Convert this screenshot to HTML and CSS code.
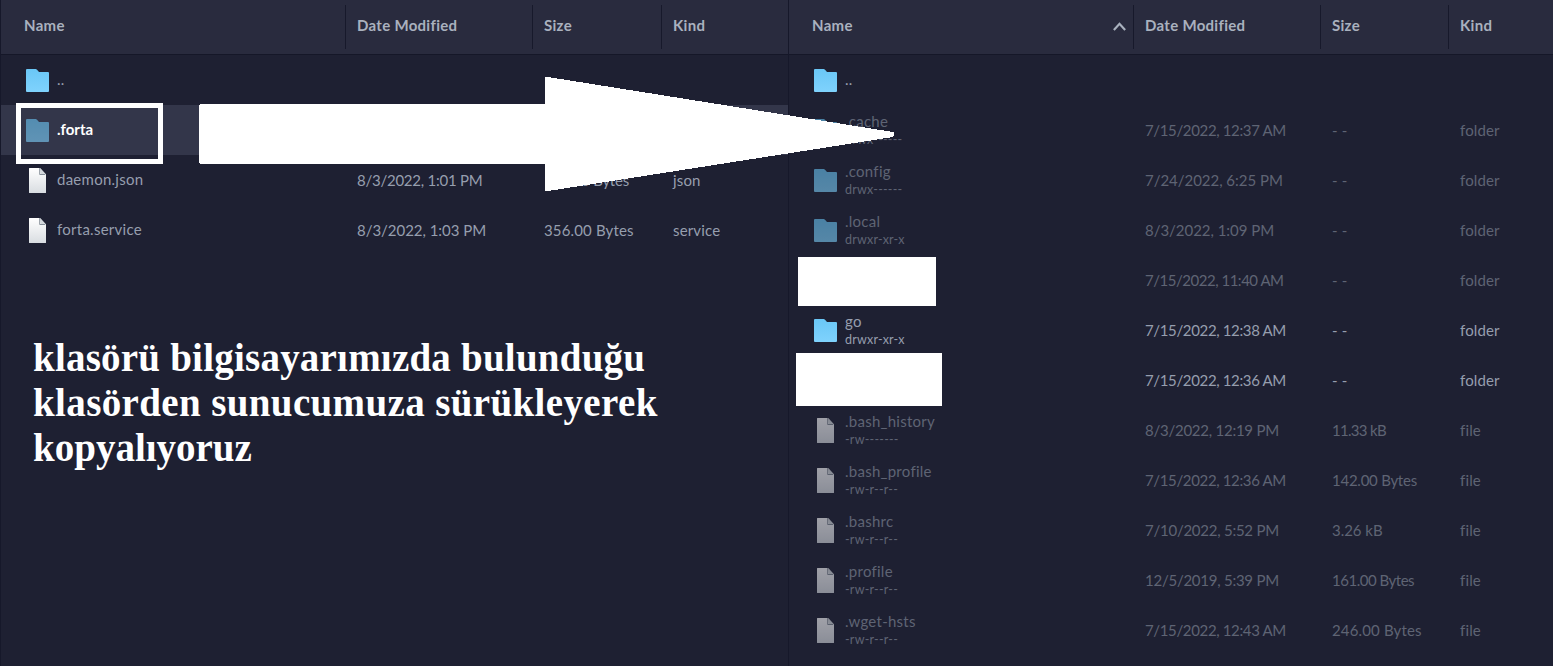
FILE: index.html
```html
<!DOCTYPE html>
<html lang="tr">
<head>
<meta charset="utf-8">
<title>Dosyalar</title>
<link rel="stylesheet" href="styles.css">
</head>
<body>
<svg class="defs" width="0" height="0">
  <defs>
    <linearGradient id="blue" x1="0" y1="0" x2="0" y2="1"><stop offset="0" stop-color="#6ac7f6"/><stop offset="1" stop-color="#7fd2fd"/></linearGradient>
    <linearGradient id="paper" x1="0" y1="0" x2="0" y2="1"><stop offset="0" stop-color="#ffffff"/><stop offset="1" stop-color="#d9dde1"/></linearGradient>
    <symbol id="folder" viewBox="0 0 23 23"><path fill="url(#blue)" d="M1 0h8.6c.6 0 1 .2 1.400.7L13 3h9a1 1 0 0 1 1 1v18a1 1 0 0 1-1 1H1a1 1 0 0 1-1-1V1a1 1 0 0 1 1-1z"/></symbol>
    <symbol id="file" viewBox="0 0 17 25"><path fill="url(#paper)" d="M.5 0H11l6 6.500v18a.5.5 0 0 1-.5.5H.5a.5.5 0 0 1-.5-.5V.5A.5.5 0 0 1 .5 0z"/><path fill="#d3d8dc" d="M11 0l6 6.500h-5z"/><path fill="none" stroke="#6b7681" stroke-width=".8" d="M10.700 0v6.500H16"/></symbol>
  </defs>
</svg>
<main class="panes">
  <section class="pane">
    <div class="head"><span>Name</span><span>Date Modified</span><span>Size</span><span>Kind</span></div>
    <div class="row"><div class="name"><svg class="folder"><use href="#folder"/></svg><b>..</b></div></div>
    <div class="row selected"><div class="name"><svg class="folder"><use href="#folder"/></svg><b>.forta</b></div></div>
    <div class="row"><div class="name"><svg class="file"><use href="#file"/></svg><b>daemon.json</b></div><span class="k1">8/3/2022, 1:01 PM</span><span class="k1">155.00 Bytes</span><span>json</span></div>
    <div class="row"><div class="name"><svg class="file"><use href="#file"/></svg><b>forta.service</b></div><span class="k0">8/3/2022, 1:03 PM</span><span>356.00 Bytes</span><span>service</span></div>
    <p class="note"><span class="n1">klasörü bilgisayarımızda bulunduğu</span><br><span class="n2">klasörden sunucumuza sürükleyerek</span><br>kopyalıyoruz</p>
  </section>
  <section class="pane remote">
    <div class="head"><span>Name<svg class="sort" viewBox="0 0 12 8"><path d="M.8 7.200l5.200-5.700 5.200 5.700"/></svg></span><span>Date Modified</span><span>Size</span><span>Kind</span></div>
    <div class="row"><div class="name"><svg class="folder"><use href="#folder"/></svg><b>..</b></div></div>
    <div class="row dim"><div class="name"><svg class="folder"><use href="#folder"/></svg><b>.cache<i>drwx------</i></b></div><span class="k2">7/15/2022, 12:37 AM</span><span>- -</span><span>folder</span></div>
    <div class="row dim"><div class="name"><svg class="folder"><use href="#folder"/></svg><b>.config<i>drwx------</i></b></div><span class="k0">7/24/2022, 6:25 PM</span><span>- -</span><span>folder</span></div>
    <div class="row dim"><div class="name"><svg class="folder"><use href="#folder"/></svg><b>.local<i>drwxr-xr-x</i></b></div><span class="k0">8/3/2022, 1:09 PM</span><span>- -</span><span>folder</span></div>
    <div class="row dim"><div class="name"></div><span class="k3">7/15/2022, 11:40 AM</span><span>- -</span><span>folder</span></div>
    <div class="row"><div class="name"><svg class="folder"><use href="#folder"/></svg><b>go<i>drwxr-xr-x</i></b></div><span class="k2">7/15/2022, 12:38 AM</span><span>- -</span><span>folder</span></div>
    <div class="row"><div class="name"></div><span class="k2">7/15/2022, 12:36 AM</span><span>- -</span><span>folder</span></div>
    <div class="row dim"><div class="name"><svg class="file"><use href="#file"/></svg><b>.bash_history<i>-rw-------</i></b></div><span class="k1">8/3/2022, 12:19 PM</span><span class="k4">11.33 kB</span><span>file</span></div>
    <div class="row dim"><div class="name"><svg class="file"><use href="#file"/></svg><b>.bash_profile<i>-rw-r--r--</i></b></div><span class="k2">7/15/2022, 12:36 AM</span><span class="k1">142.00 Bytes</span><span>file</span></div>
    <div class="row dim"><div class="name"><svg class="file"><use href="#file"/></svg><b>.bashrc<i>-rw-r--r--</i></b></div><span class="k1">7/10/2022, 5:52 PM</span><span class="k0">3.26 kB</span><span>file</span></div>
    <div class="row dim"><div class="name"><svg class="file"><use href="#file"/></svg><b>.profile<i>-rw-r--r--</i></b></div><span class="k1">12/5/2019, 5:39 PM</span><span class="k3">161.00 Bytes</span><span>file</span></div>
    <div class="row dim"><div class="name"><svg class="file"><use href="#file"/></svg><b>.wget-hsts<i>-rw-r--r--</i></b></div><span class="k2">7/15/2022, 12:43 AM</span><span>246.00 Bytes</span><span>file</span></div>
  </section>
</main>
<div class="frame"></div>
<svg class="arrow" width="697" height="115" viewBox="0 0 697 115" shape-rendering="crispEdges"><path fill="#fff" d="M1 27h345V0h3l345 55q3 2 0 5L349 114h-3V87H1l-1-1V28z"/></svg>
<div class="cover first"></div>
<div class="cover second"></div>
</body>
</html>
```

FILE: styles.css
```css
body {
  margin: 0;
  width: 1553px;
  height: 666px;
  overflow: hidden;
  background: #1e2032;
  color: #969eae;
  font: 15px/20px Lato, "Noto Sans", sans-serif;
  position: relative;
}
.defs { position: absolute; }
.panes { display: grid; grid-template-columns: 788px 765px; height: 666px; }
.pane { border-left: 1px solid #16182a; box-sizing: border-box; overflow: hidden; }
.head, .row { display: grid; grid-template-columns: 344px 187px 129px 1fr; align-items: center; }
.remote .head, .remote .row { grid-template-columns: 344px 187px 128px 1fr; }
.head { height: 54px; background: #292b3e; border-bottom: 1px solid #151728; color: #a9b1be; font-weight: 700; letter-spacing: .3px; }
.head span {
  display: flex;
  align-items: center;
  justify-content: space-between;
  height: 44px;
  box-sizing: border-box;
  padding: 0 7px 4px 11px;
  border-left: 1px solid #17192b;
}
.head span:first-child { border-left: 0; padding-left: 23px; }
.sort { width: 13px; height: 9px; margin-top: 3px; }
.sort path { fill: none; stroke: #a9b1be; stroke-width: 2; }
.row { height: 50px; white-space: nowrap; }
.row > span { padding-left: 12px; letter-spacing: .15px; }
.row > .k0 { letter-spacing: -.03px; }
.row > .k1 { letter-spacing: -.25px; }
.row > .k2 { letter-spacing: -.36px; }
.row > .k3 { letter-spacing: -.48px; }
.row > .k4 { letter-spacing: -.7px; }
.name { display: flex; align-items: center; padding-left: 25px; }
.name b { font-weight: 400; letter-spacing: .26px; padding-bottom: 2px; }
.name i { display: block; font-style: normal; font-size: 12.5px; line-height: 17px; letter-spacing: .22px; }
.folder { width: 23px; height: 23px; margin-right: 8px; }
.file { width: 17px; height: 25px; margin: 0 11px 0 3px; }
.selected { background: #33364a; }
.selected b { color: #fff; font-weight: 700; letter-spacing: 0; }
.selected svg { opacity: .6; }
.dim { color: #5f6474; }
.dim svg { opacity: .58; }
.note {
  margin: 80px 0 0 32px;
  color: #fff;
  font: bold 39px/45px "Liberation Serif", serif;
  white-space: nowrap;
}
.n1 { letter-spacing: .22px; }
.n2 { letter-spacing: .37px; }
.frame {
  position: absolute;
  left: 16px;
  top: 103px;
  width: 147px;
  height: 61px;
  box-sizing: border-box;
  border: 5px solid #fff;
}
.arrow { position: absolute; left: 199px; top: 77px; }
.cover { position: absolute; background: #fff; }
.first { left: 798px; top: 257px; width: 138px; height: 49px; }
.second { left: 796px; top: 353px; width: 146px; height: 53px; }
```
